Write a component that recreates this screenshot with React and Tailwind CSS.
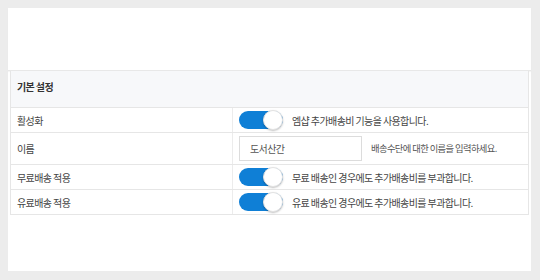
import React from "react";

const font = {
  fontFamily: '"Noto Sans CJK KR", "Noto Sans", sans-serif',
};

function Toggle() {
  return (
    <div className="relative w-[44px] h-[18px] rounded-full bg-[#0f7fd6] shrink-0">
      <div className="absolute right-0 top-[-1px] w-[20px] h-[20px] rounded-full bg-white border border-[#e3e3e3] shadow-[0_1px_2px_rgba(0,0,0,0.25)]"></div>
    </div>
  );
}

function Row({ label, children, tall }) {
  return (
    <div
      className={`flex border-t border-[#e6e6e6] ${tall ? "h-[32px]" : "h-[25px]"}`}
    >
      <div className="w-[222px] shrink-0 border-r border-[#ececec] flex items-center pl-[6px] text-[#444]">
        {label}
      </div>
      <div className="flex-1 flex items-center pl-[6px] gap-[9px] text-[#444]">
        {children}
      </div>
    </div>
  );
}

export default function App() {
  return (
    <div
      className="w-[540px] h-[280px] bg-[#ececec] pt-[8px] pl-[8px]"
      style={font}
    >
      <div className="w-[523px] h-[263px] bg-white flex flex-col text-[10px] tracking-[-0.6px]">
        {/* top area */}
        <div className="h-[63px] shrink-0 border-b border-[#e8e8e8] shadow-[0_1px_1px_rgba(0,0,0,0.04)]"></div>

        {/* settings table */}
        <div className="ml-[2px] mr-[2px] border-l border-r border-b border-[#e6e6e6]">
          <div className="h-[36px] bg-[#f7f8fa] flex items-center pl-[6px] pb-[6px] font-bold text-[#333]">
            기본 설정
          </div>
          <Row label="활성화">
            <Toggle />
            <span>엠샵 추가배송비 기능을 사용합니다.</span>
          </Row>
          <Row label="이름" tall>
            <div className="w-[123px] h-[25px] border border-[#dcdcdc] flex items-center pl-[10px] text-[#555]">
              도서산간
            </div>
            <span className="text-[#555] text-[9.3px]">
              배송수단에 대한 이름을 입력하세요.
            </span>
          </Row>
          <Row label="무료배송 적용">
            <Toggle />
            <span>무료 배송인 경우에도 추가배송비를 부과합니다.</span>
          </Row>
          <Row label="유료배송 적용">
            <Toggle />
            <span>유료 배송인 경우에도 추가배송비를 부과합니다.</span>
          </Row>
        </div>
      </div>
    </div>
  );
}
